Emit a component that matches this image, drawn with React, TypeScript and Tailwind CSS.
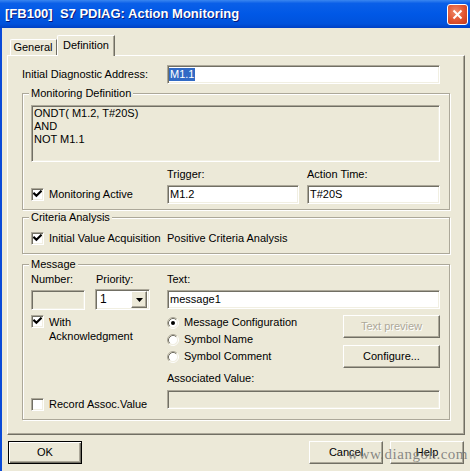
import React from "react";

const sunken =
  "border border-t-[#aca899] border-l-[#aca899] border-r-white border-b-white shadow-[inset_1px_1px_0_#716f64,inset_-1px_-1px_0_#f1efe2]";
const raised =
  "border border-t-white border-l-white border-r-[#716f64] border-b-[#716f64] shadow-[inset_-1px_-1px_0_#aca899]";
const etched = "border border-[#aca899] shadow-[inset_1px_1px_0_#fff,1px_1px_0_#fff]";

function Check({ checked }: { checked: boolean }) {
  return (
    <span className={`w-[13px] h-[13px] bg-white ${sunken} shrink-0 flex items-center justify-center`}>
      {checked && (
        <svg width="9" height="9" viewBox="0 0 9 9">
          <path d="M1.2 3.6 L3.4 5.8 L7.8 1.4" stroke="#000" strokeWidth="2.1" fill="none" strokeLinecap="square" />
        </svg>
      )}
    </span>
  );
}

function Radio({ checked }: { checked: boolean }) {
  return (
    <svg width="12" height="12" viewBox="0 0 12 12" className="shrink-0">
      <circle cx="6" cy="6" r="4.5" fill="#fff" />
      <path d="M2.11 9.89 A5.5 5.5 0 0 1 9.89 2.11" stroke="#aca899" fill="none" />
      <path d="M9.89 2.11 A5.5 5.5 0 0 1 2.11 9.89" stroke="#fff" fill="none" />
      <path d="M2.82 9.18 A4.5 4.5 0 0 1 9.18 2.82" stroke="#716f64" fill="none" />
      <path d="M9.18 2.82 A4.5 4.5 0 0 1 2.82 9.18" stroke="#f1efe2" fill="none" />
      {checked && <circle cx="6" cy="6" r="2" fill="#000" />}
    </svg>
  );
}

function GroupLabel({ children }: { children: React.ReactNode }) {
  return <div className="-mt-[7px] -ml-[2px] w-fit px-[2px] bg-[#ece9d8] leading-[13px]">{children}</div>;
}

export default function App() {
  return (
    <div className="w-[470px] h-[471px] bg-[#ece9d8] overflow-hidden relative flex flex-col text-[11px] leading-[13px] text-black font-['Liberation_Sans',Arial,sans-serif]">
      {/* Title bar */}
      <div className="h-[28px] shrink-0 flex items-center pl-[5px] pr-[2px] bg-[linear-gradient(to_bottom,#3a86f0_0%,#0a5fe8_12%,#0058e6_50%,#0052dc_85%,#0040c4_100%)]">
        <span className="whitespace-pre text-white font-bold text-[13px] leading-[16px] [text-shadow:1px_1px_0_#0a1a7a]">
          [FB100]  S7 PDIAG: Action Monitoring
        </span>
        <div className="ml-auto w-[21px] h-[21px] rounded-[3px] border border-white bg-[radial-gradient(circle_at_40%_35%,#f08a6a_0%,#e0532f_55%,#c2391a_100%)] flex items-center justify-center">
          <svg width="11" height="11" viewBox="0 0 11 11">
            <path d="M1.5 1.5 L9.5 9.5 M9.5 1.5 L1.5 9.5" stroke="#fff" strokeWidth="2" />
          </svg>
        </div>
      </div>

      {/* Body */}
      <div className="flex-1 border-l-2 border-[#0a4ad8] flex flex-col">
        {/* Tabs */}
        <div className="flex items-end ml-[8px] pt-[7px]">
          <div className="w-[47px] h-[16px] border-t border-l border-white border-r border-r-[#716f64] rounded-tl-[2px] flex items-center justify-center pr-[1px]">
            General
          </div>
          <div className="relative z-10 -mb-[1px] w-[58px] h-[21px] bg-[#ece9d8] border-t border-l border-white border-r border-r-[#716f64] shadow-[inset_-1px_0_0_#aca899] rounded-tl-[2px] flex items-center justify-center pb-[2px]">
            Definition
          </div>
        </div>

        {/* Panel */}
        <div className="relative z-0 ml-[5px] w-[458px] h-[380px] border border-t-white border-l-white border-r-[#716f64] border-b-[#716f64] shadow-[inset_-1px_-1px_0_#aca899] pl-[14px] pt-[9px]">
          <div className="flex items-center h-[19px]">
            <span className="w-[145px]">Initial Diagnostic Address:</span>
            <div className={`w-[273px] h-[19px] bg-white ${sunken} flex items-center pl-[1px]`}>
              <span className="bg-[#316ac5] text-white leading-[13px] px-[1px]">M1.1</span>
            </div>
          </div>

          {/* Monitoring Definition */}
          <div className={`mt-[9px] w-[428px] ${etched} pl-[8px] pb-[5px]`}>
            <GroupLabel>Monitoring Definition</GroupLabel>
            <div className={`mt-[5px] w-[409px] h-[57px] ${sunken} pl-[2px] pt-[1px]`}>
              <div>ONDT( M1.2, T#20S)</div>
              <div>AND</div>
              <div>NOT M1.1</div>
            </div>
            <div className="flex mt-[6px]">
              <div className="w-[136px] flex flex-col justify-end">
                <div className="h-[19px] flex items-center gap-[5px]">
                  <Check checked />
                  <span>Monitoring Active</span>
                </div>
              </div>
              <div className="w-[132px]">
                <div>Trigger:</div>
                <div className={`mt-[4px] h-[19px] bg-white ${sunken} flex items-center pl-[2px]`}>M1.2</div>
              </div>
              <div className="ml-[8px] w-[133px]">
                <div>Action Time:</div>
                <div className={`mt-[4px] h-[19px] bg-white ${sunken} flex items-center pl-[2px]`}>T#20S</div>
              </div>
            </div>
          </div>

          {/* Criteria Analysis */}
          <div className={`mt-[7px] w-[428px] ${etched} pl-[8px] pb-[8px]`}>
            <GroupLabel>Criteria Analysis</GroupLabel>
            <div className="flex items-center mt-[8px] h-[13px]">
              <div className="w-[136px] flex items-center gap-[5px]">
                <Check checked />
                <span className="whitespace-nowrap">Initial Value Acquisition</span>
              </div>
              <span>Positive Criteria Analysis</span>
            </div>
          </div>

          {/* Message */}
          <div className={`mt-[10px] w-[428px] ${etched} pl-[8px] pb-[8px]`}>
            <GroupLabel>Message</GroupLabel>
            <div className="flex mt-[2px]">
              <span className="w-[64px]">Number:</span>
              <span className="w-[72px] pl-[1px]">Priority:</span>
              <span>Text:</span>
            </div>
            <div className="flex items-center mt-[3px] h-[21px]">
              <div className={`w-[54px] h-[20px] ${sunken}`} />
              <div className={`ml-[10px] w-[55px] h-[21px] bg-white ${sunken} flex items-center pl-[4px] pr-[2px] text-[12px]`}>
                <span>1</span>
                <div className={`ml-auto w-[16px] h-[17px] bg-[#ece9d8] ${raised} flex items-center justify-center`}>
                  <svg width="7" height="4" viewBox="0 0 7 4">
                    <path d="M0 0 H7 L3.5 4 Z" fill="#000" />
                  </svg>
                </div>
              </div>
              <div className={`ml-[17px] w-[273px] h-[19px] bg-white ${sunken} flex items-center pl-[2px]`}>message1</div>
            </div>

            <div className="flex mt-[4px]">
              <div className="w-[136px] pt-[1px] flex items-start gap-[5px]">
                <Check checked />
                <div className="leading-[14px]">
                  <div>With</div>
                  <div>Acknowledgment</div>
                </div>
              </div>
              <div className="w-[176px]">
                <div className="h-[17px] flex items-center gap-[5px]">
                  <Radio checked />
                  <span>Message Configuration</span>
                </div>
                <div className="h-[17px] flex items-center gap-[5px]">
                  <Radio checked={false} />
                  <span>Symbol Name</span>
                </div>
                <div className="h-[17px] flex items-center gap-[5px]">
                  <Radio checked={false} />
                  <span>Symbol Comment</span>
                </div>
              </div>
              <div className="w-[97px] pt-[1px] flex flex-col gap-[7px]">
                <div className={`h-[23px] ${raised} flex items-center justify-center text-[#aca899] [text-shadow:1px_1px_0_#fff]`}>
                  Text preview
                </div>
                <div className={`h-[23px] ${raised} flex items-center justify-center`}>Configure...</div>
              </div>
            </div>

            <div className="flex mt-[4px]">
              <div className="w-[136px] pt-[26px]">
                <div className="flex items-center gap-[5px] h-[13px]">
                  <Check checked={false} />
                  <span>Record Assoc.Value</span>
                </div>
              </div>
              <div className="w-[273px]">
                <div>Associated Value:</div>
                <div className={`mt-[5px] h-[19px] ${sunken}`} />
              </div>
            </div>
          </div>
        </div>

        {/* Bottom buttons */}
        <div className="flex mt-[6px] ml-[6px] mr-[6px]">
          <div className="w-[74px] h-[23px] border border-black shadow-[inset_1px_1px_0_#fff,inset_-1px_-1px_0_#716f64,inset_-2px_-2px_0_#aca899] flex items-center justify-center">
            OK
          </div>
          <div className={`ml-auto w-[74px] h-[23px] ${raised} flex items-center justify-center`}>Cancel</div>
          <div className={`ml-[7px] w-[74px] h-[23px] ${raised} flex items-center justify-center`}>Help</div>
        </div>
      </div>

      {/* Watermark */}
      <div className="absolute right-[2px] bottom-[9px] text-[15px] leading-[16px] tracking-[0.5px] text-[#6e6e6e]/80 font-['Liberation_Serif',serif] pointer-events-none">
        www.diangon.com
      </div>
    </div>
  );
}
